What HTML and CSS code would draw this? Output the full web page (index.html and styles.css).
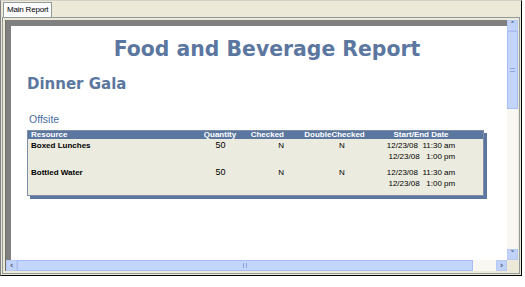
FILE: index.html
```html
<!DOCTYPE html>
<html lang="en">
<head>
    <meta charset="UTF-8">
    <title>Main Report</title>
    <link rel="stylesheet" href="styles.css">
</head>
<body>
    <div class="window">
        <div class="tabs">
            <div class="tab">Main Report</div>
        </div>
        <div class="panel">
            <div class="viewer">
                <div class="page-frame">
                    <div class="page">
                        <h1 class="report-title">Food and Beverage Report</h1>
                        <h2 class="event-name">Dinner Gala</h2>
                        <div class="section-name">Offsite</div>
                        <div class="table-wrap">
                            <div class="table">
                                <div class="row head">
                                    <div class="c-res">Resource</div>
                                    <div class="c-qty">Quantity</div>
                                    <div class="c-chk">Checked</div>
                                    <div class="c-dbl">DoubleChecked</div>
                                    <div class="c-date">Start/End Date</div>
                                </div>
                                <div class="row item">
                                    <div class="c-res name">Boxed Lunches</div>
                                    <div class="c-qty num">50</div>
                                    <div class="c-chk">N</div>
                                    <div class="c-dbl">N</div>
                                    <div class="c-date">
                                        <div class="dates">
                                            <div>12/23/08&nbsp; 11:30 am</div>
                                            <div>12/23/08&nbsp;&nbsp; 1:00 pm</div>
                                        </div>
                                    </div>
                                </div>
                                <div class="row item">
                                    <div class="c-res name">Bottled Water</div>
                                    <div class="c-qty num">50</div>
                                    <div class="c-chk">N</div>
                                    <div class="c-dbl">N</div>
                                    <div class="c-date">
                                        <div class="dates">
                                            <div>12/23/08&nbsp; 11:30 am</div>
                                            <div>12/23/08&nbsp;&nbsp; 1:00 pm</div>
                                        </div>
                                    </div>
                                </div>
                            </div>
                        </div>
                    </div>
                </div>
                <div class="vscroll">
                    <div class="sb-btn">&#708;</div>
                    <div class="sb-thumb-v"><span class="grip-v"></span></div>
                    <div class="sb-track"></div>
                    <div class="sb-btn">&#709;</div>
                </div>
                <div class="hscroll">
                    <div class="sb-btn">&lsaquo;</div>
                    <div class="sb-thumb-h"><span class="grip-h"></span></div>
                    <div class="sb-track"></div>
                    <div class="sb-btn">&rsaquo;</div>
                </div>
                <div class="corner"></div>
            </div>
        </div>
    </div>
</body>
</html>
```

FILE: styles.css
```css
* {
    margin: 0;
    padding: 0;
    box-sizing: border-box;
}

body {
    width: 525px;
    height: 287px;
    background-color: white;
    font-family: 'DejaVu Sans', sans-serif;
    overflow: hidden;
}

.window {
    width: 522px;
    height: 276px;
    background-color: #ece9d8;
    border: 1px solid #000;
    border-top-color: #d4d0c8;
    border-left-color: #808080;
    display: flex;
    flex-direction: column;
}

.tabs {
    height: 16px;
    padding: 1px 0 0 2px;
    display: flex;
}

.tab {
    font-family: 'Liberation Sans', sans-serif;
    font-size: 8px;
    line-height: 14px;
    padding: 0 3px 0 3px;
    background-color: #fcfcfe;
    border: 1px solid #919b9c;
    border-bottom: none;
    color: #000;
    letter-spacing: -0.2px;
}

.panel {
    flex: 1;
    margin: 0 1px 1px 1px;
    border: 1px solid #919b9c;
    padding: 2px 1px 2px 2px;
    display: flex;
}

.viewer {
    flex: 1;
    display: grid;
    grid-template-columns: 1fr 11px;
    grid-template-rows: 1fr 11px;
    border-left: 1px solid #716f64;
}

.page-frame {
    background-color: #808080;
    padding: 6px 0 0 5px;
    overflow: hidden;
    display: flex;
}

.page {
    flex: 1;
    background-color: white;
    padding-left: 16px;
}

.report-title {
    font-size: 20.4px;
    font-weight: bold;
    color: #5b77a0;
    text-align: center;
    margin-top: 11px;
    line-height: 24px;
}

.event-name {
    font-size: 15px;
    font-weight: bold;
    color: #5b77a0;
    margin-top: 14px;
    line-height: 18px;
}

.section-name {
    font-family: 'Liberation Sans', sans-serif;
    font-size: 10.5px;
    color: #4a6fa5;
    margin-top: 20px;
    padding-left: 2px;
    line-height: 13px;
}

.table-wrap {
    width: 457px;
    margin-top: 4px;
    box-shadow: 3px 3px 0 #5b77a0;
}

.table {
    background-color: #ecebdf;
    border: 1px solid #7f8da8;
    height: 66px;
    font-family: 'Liberation Sans', sans-serif;
    font-size: 8px;
    color: #000;
}

.row {
    display: flex;
    padding-left: 3px;
}

.head {
    background-color: #5b77a0;
    color: white;
    font-weight: bold;
    line-height: 8px;
    height: 8px;
}

.item {
    height: 27px;
    padding-top: 1px;
    line-height: 11px;
}

.c-res {
    width: 169px;
}

.c-qty {
    width: 40px;
    text-align: center;
}

.c-chk {
    width: 44px;
    text-align: right;
}

.c-dbl {
    width: 101px;
    text-align: center;
}

.item .c-dbl {
    padding-left: 15px;
}

.c-date {
    width: 72px;
    text-align: center;
}

.dates {
    display: inline-block;
    text-align: right;
}

.name {
    font-weight: bold;
}

.num {
    font-size: 9px;
    padding-left: 1px;
}

.vscroll, .hscroll {
    display: flex;
    background-color: #f8f7f1;
}

.vscroll {
    flex-direction: column;
    grid-row: 1;
    grid-column: 2;
}

.hscroll {
    grid-row: 2;
    grid-column: 1;
}

.corner {
    background-color: #ece9d8;
}

.sb-btn {
    width: 11px;
    height: 11px;
    background-color: #c1d3fb;
    border: 1px solid #b6c9f4;
    color: #4d6185;
    font-size: 9px;
    line-height: 9px;
    text-align: center;
    font-weight: bold;
}

.sb-thumb-v {
    height: 78px;
    background-color: #c4d5fc;
    border: 1px solid #a8bdf1;
    display: flex;
    align-items: center;
    justify-content: center;
}

.sb-thumb-h {
    width: 456px;
    background-color: #c4d5fc;
    border: 1px solid #a8bdf1;
    display: flex;
    align-items: center;
    justify-content: center;
}

.grip-v {
    width: 5px;
    height: 4px;
    border-top: 1px solid #8aa5e6;
    border-bottom: 1px solid #8aa5e6;
}

.grip-h {
    width: 4px;
    height: 5px;
    border-left: 1px solid #8aa5e6;
    border-right: 1px solid #8aa5e6;
}

.sb-track {
    flex: 1;
}
```
